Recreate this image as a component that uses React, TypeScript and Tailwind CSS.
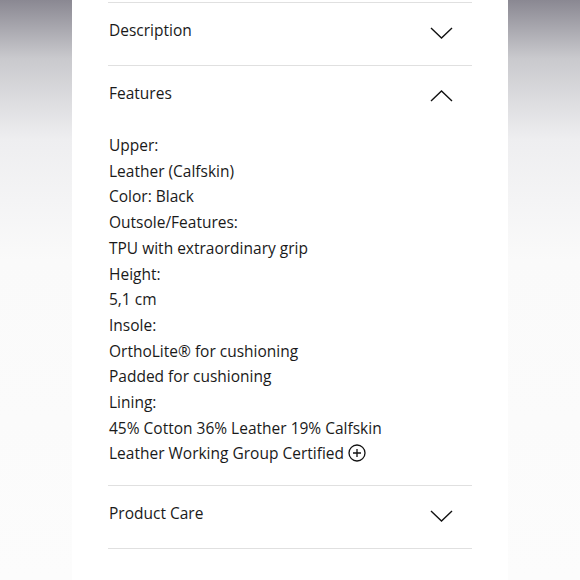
import React, { useState } from 'react';

const Chevron = ({ up }: { up?: boolean }) => (
  <svg width="23" height="12" viewBox="0 0 23 12" fill="none" className="shrink-0">
    <polyline
      points={up ? '1,11 11.5,1 22,11' : '1,1 11.5,11 22,1'}
      stroke="#111"
      strokeWidth="1.4"
      strokeLinejoin="miter"
    />
  </svg>
);

const PlusCircle = () => (
  <svg width="18" height="18" viewBox="0 0 18 18" fill="none" className="inline-block align-[-3px] ml-[4px]">
    <circle cx="9" cy="9" r="8" stroke="#111" strokeWidth="1.3" />
    <path d="M9 5v8M5 9h8" stroke="#111" strokeWidth="1.3" />
  </svg>
);

const features = [
  'Upper:',
  'Leather (Calfskin)',
  'Color: Black',
  'Outsole/Features:',
  'TPU with extraordinary grip',
  'Height:',
  '5,1 cm',
  'Insole:',
  'OrthoLite® for cushioning',
  'Padded for cushioning',
  'Lining:',
  '45% Cotton 36% Leather 19% Calfskin',
];

function Header({ title, open, onClick }: { title: string; open?: boolean; onClick: () => void }) {
  return (
    <button
      onClick={onClick}
      className="w-full h-[62px] flex justify-between items-start pl-px pr-[19px] text-left"
    >
      <span className="pt-[15px] leading-[24px]">{title}</span>
      <span className="pt-[24px]">
        <Chevron up={open} />
      </span>
    </button>
  );
}

export default function App() {
  const [open, setOpen] = useState('features');
  const toggle = (k: string) => setOpen(open === k ? '' : k);

  return (
    <div className="flex w-[580px] h-[580px] overflow-hidden bg-white font-['Open_Sans',sans-serif] text-[15.5px] text-[#1a1a1a]">
      <div className="w-[72px] bg-[linear-gradient(180deg,#8a8892_0%,#c9c9cd_10%,#eeeef0_24%,#fafafa_45%,#fcfcfc_100%)]" />

      <div className="w-[436px] bg-white px-9 pt-[2px]">
        <div className="border-t border-[#e0e0e0]">
          <Header title="Description" open={open === 'description'} onClick={() => toggle('description')} />
        </div>

        <div className="border-t border-[#e0e0e0]">
          <Header title="Features" open={open === 'features'} onClick={() => toggle('features')} />
          {open === 'features' && (
            <div className="pl-px pt-[5px] pb-[18px] leading-[25.7px]">
              {features.map((f) => (
                <div key={f}>{f}</div>
              ))}
              <div>
                Leather Working Group Certified
                <PlusCircle />
              </div>
            </div>
          )}
        </div>

        <div className="border-t border-b border-[#e0e0e0]">
          <Header title="Product Care" open={open === 'care'} onClick={() => toggle('care')} />
        </div>
      </div>

      <div className="flex-1 bg-[linear-gradient(180deg,#8a8892_0%,#c9c9cd_10%,#eeeef0_24%,#fafafa_45%,#fcfcfc_100%)]" />
    </div>
  );
}
